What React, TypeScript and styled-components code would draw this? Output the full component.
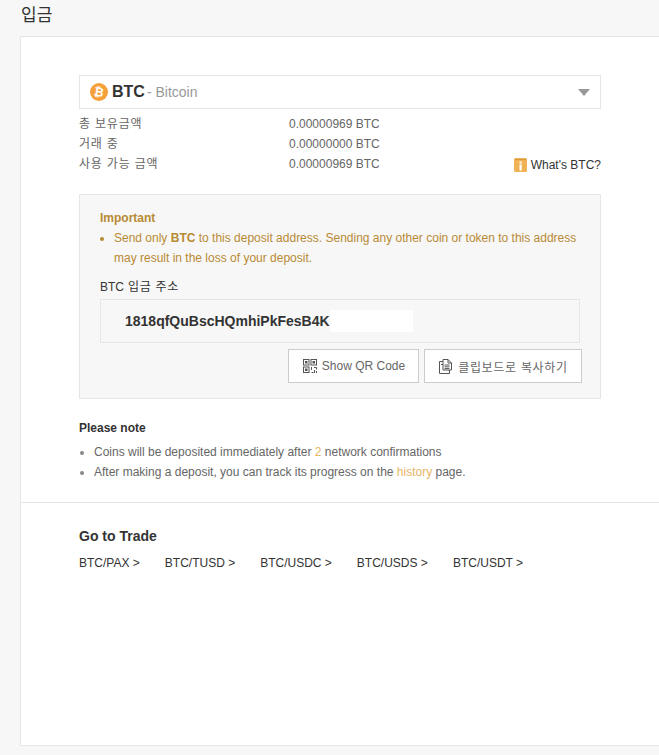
import React from "react"
import styled, { createGlobalStyle } from "styled-components"

const GlobalStyle = createGlobalStyle`
  html, body {
    margin: 0;
    padding: 0;
    background: #f7f7f7;
    overflow: hidden;
  }
  body {
    font-family: "Liberation Sans", "Noto Sans CJK KR", sans-serif;
    font-size: 12px;
    color: #333;
  }
`

const Page = styled.div`
  width: 659px;
  height: 755px;
  overflow: hidden;
  padding-left: 20px;
  box-sizing: border-box;
`

const PageTitle = styled.h1`
  margin: 0;
  padding-left: 1px;
  height: 36px;
  line-height: 32px;
  font-size: 17px;
  font-weight: 400;
  color: #333;
`

const Panel = styled.div`
  height: 710px;
  box-sizing: border-box;
  background: #fff;
  border: 1px solid #e6e6e6;
  border-right: 0;
`

const DepositSection = styled.section`
  width: 522px;
  padding: 38px 0 20px 58px;
`

const CoinSelect = styled.div`
  height: 34px;
  box-sizing: border-box;
  border: 1px solid #e6e6e6;
  display: flex;
  align-items: center;
  padding: 0 10px;
`

const CoinSymbol = styled.strong`
  margin-left: 4px;
  font-size: 16px;
  font-weight: 700;
  color: #333;
`

const CoinName = styled.span`
  margin-left: 2px;
  font-size: 14px;
  color: #999;
`

const Caret = styled.span`
  margin-left: auto;
  width: 0;
  height: 0;
  border-left: 6.5px solid transparent;
  border-right: 6.5px solid transparent;
  border-top: 7px solid #999;
`

const Balances = styled.div`
  margin-top: 5px;
  position: relative;
`

const BalanceRow = styled.div`
  display: flex;
  height: 20px;
  line-height: 20px;
  color: #666;
`

const BalanceLabel = styled.span`
  width: 210px;
  letter-spacing: 0.8px;
`

const WhatsLink = styled.a`
  position: absolute;
  right: 0;
  bottom: -1px;
  display: flex;
  align-items: center;
  gap: 4px;
  line-height: 20px;
  color: #333;
`

const ImportantBox = styled.div`
  margin-top: 20px;
  height: 205px;
  box-sizing: border-box;
  background: #f7f7f7;
  border: 1px solid #e6e6e6;
  padding: 13px 20px 0;
`

const WarnTitle = styled.div`
  line-height: 20px;
  font-weight: 700;
  color: #b78a34;
`

const WarnList = styled.ul`
  margin: 0;
  padding: 0 0 0 14px;
  color: #b78a34;
  line-height: 20px;
`

const AddressLabel = styled.div`
  margin-top: 9px;
  line-height: 20px;
  color: #333;
`

const KoreanText = styled.span`
  letter-spacing: 0.7px;
`

const AddressField = styled.div`
  margin-top: 2px;
  height: 44px;
  box-sizing: border-box;
  border: 1px solid #e6e6e6;
  display: flex;
  align-items: center;
  padding-left: 24px;
`

const AddressText = styled.span`
  font-size: 14px;
  font-weight: 700;
  color: #333;
`

const AddressMask = styled.span`
  width: 83px;
  height: 22px;
  background: #fff;
`

const ButtonRow = styled.div`
  margin: 6px -2px 0 0;
  display: flex;
  justify-content: flex-end;
  gap: 5px;
`

const ActionButton = styled.button<{ $width: number }>`
  height: 34px;
  box-sizing: border-box;
  background: #fff;
  border: 1px solid #ccc;
  padding: 0 0 0 1px;
  width: ${props => props.$width}px;
  display: flex;
  align-items: center;
  justify-content: center;
  gap: 5px;
  font: inherit;
  color: #666;
`

const NoteSection = styled.div`
  margin-top: 19px;
`

const NoteTitle = styled.div`
  line-height: 20px;
  font-weight: 700;
  color: #333;
`

const NoteList = styled.ul`
  margin: 4px 0 0;
  padding: 0 0 0 15px;
  line-height: 20px;
  color: #666;
  li::marker {
    color: #888;
  }
`

const Accent = styled.span`
  color: #e8b565;
`

const Divider = styled.hr`
  margin: 0;
  border: 0;
  border-top: 1px solid #e6e6e6;
`

const TradeSection = styled.section`
  padding: 23px 0 0 58px;
`

const TradeTitle = styled.h2`
  margin: 0;
  font-size: 14px;
  line-height: 20px;
  font-weight: 700;
  color: #333;
`

const TradeLinks = styled.div`
  margin-top: 7px;
  display: flex;
  gap: 25px;
`

const TradeLink = styled.a`
  line-height: 20px;
  color: #333;
`

const BitcoinIcon = () => (
  <svg width="18" height="18" viewBox="0 0 18 18">
    <circle cx="9" cy="9" r="9" fill="#f4a13a" />
    <g transform="rotate(12 9 9)">
      <text x="9" y="13.2" textAnchor="middle" fontSize="12" fontWeight="700" fill="#fff" fontFamily="Liberation Sans">₿</text>
    </g>
  </svg>
)

const BookIcon = () => (
  <svg width="13" height="14" viewBox="0 0 13 14">
    <rect x="0" y="0" width="13" height="14" rx="1.5" fill="#f0b254" />
    <rect x="1" y="1" width="11" height="1" fill="#d99a3f" />
    <rect x="5.5" y="3.5" width="2.2" height="2" fill="#fff" />
    <rect x="5.5" y="6.5" width="2.2" height="6" fill="#fff" />
  </svg>
)

const QrIcon = () => (
  <svg width="14" height="14" viewBox="0 0 14 14" fill="none" stroke="#555" strokeWidth="1">
    <rect x="0.5" y="0.5" width="5.5" height="5.5" />
    <rect x="8" y="0.5" width="5.5" height="5.5" />
    <rect x="0.5" y="8" width="5.5" height="5.5" />
    <rect x="2" y="2" width="2.5" height="2.5" fill="#555" stroke="none" />
    <rect x="9.5" y="2" width="2.5" height="2.5" fill="#555" stroke="none" />
    <rect x="2" y="9.5" width="2.5" height="2.5" fill="#555" stroke="none" />
    <path d="M8.5 8v3M8.5 13.5h2M11 8.5h2.5v2M11.5 11v3M13.5 12v2" />
  </svg>
)

const CopyIcon = () => (
  <svg width="14" height="15" viewBox="0 0 14 15" fill="none" stroke="#555" strokeWidth="1">
    <path d="M4 2.5H0.5v12H10.5V11" />
    <path d="M4 0.5h5l3.5 3.5v7H4z" fill="#fff" />
    <path d="M9 0.5V4h3.5M5.5 6h5M5.5 7.8h5M5.5 9.6h5M2 5.5h2" />
  </svg>
)

const balances = [
  ["총 보유금액", "0.00000969 BTC"],
  ["거래 중", "0.00000000 BTC"],
  ["사용 가능 금액", "0.00000969 BTC"],
]

const pairs = ["BTC/PAX", "BTC/TUSD", "BTC/USDC", "BTC/USDS", "BTC/USDT"]

export default function App() {
  return (
    <Page>
      <GlobalStyle />
      <PageTitle>입금</PageTitle>
      <Panel>
        <DepositSection>
          <CoinSelect>
            <BitcoinIcon />
            <CoinSymbol>BTC</CoinSymbol>
            <CoinName>- Bitcoin</CoinName>
            <Caret />
          </CoinSelect>
          <Balances>
            {balances.map(([label, value]) => (
              <BalanceRow key={label}>
                <BalanceLabel>{label}</BalanceLabel>
                <span>{value}</span>
              </BalanceRow>
            ))}
            <WhatsLink>
              <BookIcon />
              What's BTC?
            </WhatsLink>
          </Balances>
          <ImportantBox>
            <WarnTitle>Important</WarnTitle>
            <WarnList>
              <li>
                Send only <b>BTC</b> to this deposit address. Sending any other coin or token to this address may result in the loss of your deposit.
              </li>
            </WarnList>
            <AddressLabel>
              BTC<KoreanText> 입금 주소</KoreanText>
            </AddressLabel>
            <AddressField>
              <AddressText>1818qfQuBscHQmhiPkFesB4K</AddressText>
              <AddressMask />
            </AddressField>
            <ButtonRow>
              <ActionButton $width={131}>
                <QrIcon />
                Show QR Code
              </ActionButton>
              <ActionButton $width={158}>
                <CopyIcon />
                <KoreanText>클립보드로 복사하기</KoreanText>
              </ActionButton>
            </ButtonRow>
          </ImportantBox>
          <NoteSection>
            <NoteTitle>Please note</NoteTitle>
            <NoteList>
              <li>
                Coins will be deposited immediately after <Accent>2</Accent> network confirmations
              </li>
              <li>
                After making a deposit, you can track its progress on the <Accent>history</Accent> page.
              </li>
            </NoteList>
          </NoteSection>
        </DepositSection>
        <Divider />
        <TradeSection>
          <TradeTitle>Go to Trade</TradeTitle>
          <TradeLinks>
            {pairs.map(pair => (
              <TradeLink key={pair}>{pair} &gt;</TradeLink>
            ))}
          </TradeLinks>
        </TradeSection>
      </Panel>
    </Page>
  )
}
